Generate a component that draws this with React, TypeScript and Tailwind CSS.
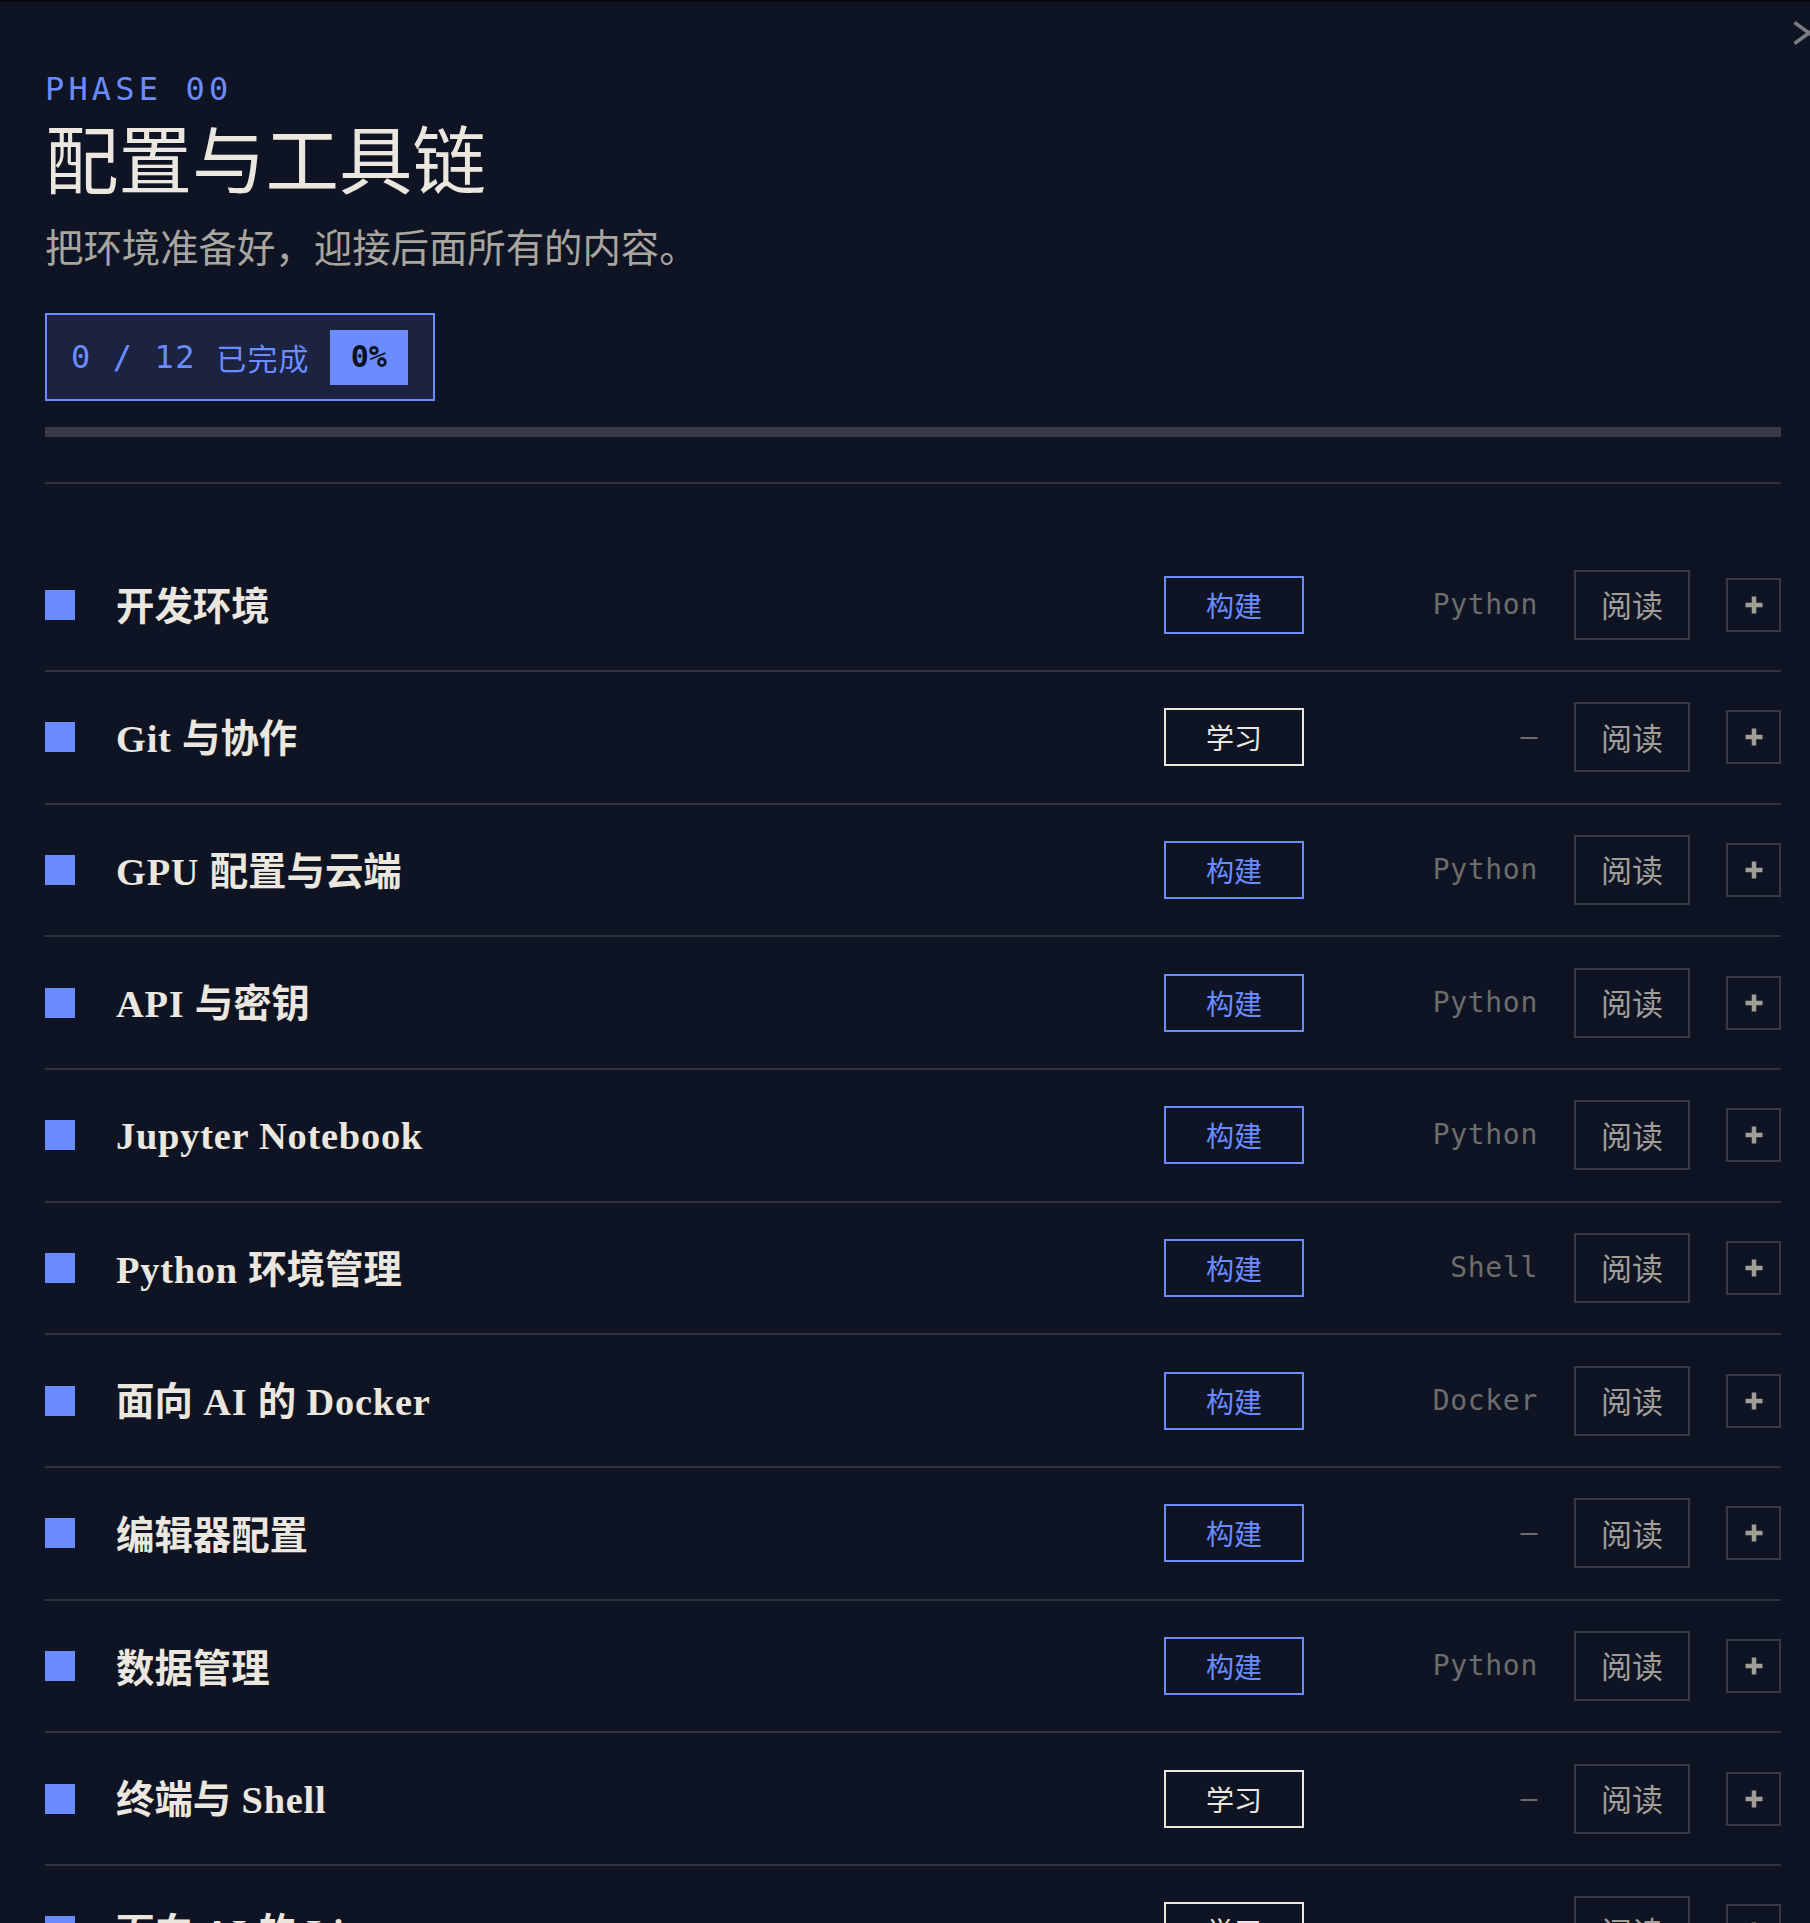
import React from "react";

type Row = { t: string; kind: "build" | "learn"; lang: string };

const rows: Row[] = [
  { t: "开发环境", kind: "build", lang: "Python" },
  { t: "Git 与协作", kind: "learn", lang: "—" },
  { t: "GPU 配置与云端", kind: "build", lang: "Python" },
  { t: "API 与密钥", kind: "build", lang: "Python" },
  { t: "Jupyter Notebook", kind: "build", lang: "Python" },
  { t: "Python 环境管理", kind: "build", lang: "Shell" },
  { t: "面向 AI 的 Docker", kind: "build", lang: "Docker" },
  { t: "编辑器配置", kind: "build", lang: "—" },
  { t: "数据管理", kind: "build", lang: "Python" },
  { t: "终端与 Shell", kind: "learn", lang: "—" },
  { t: "面向 AI 的 Linux", kind: "learn", lang: "—" },
  { t: "调试与日志", kind: "build", lang: "Python" },
];

function splitRuns(s: string): { text: string; cjk: boolean }[] {
  const out: { text: string; cjk: boolean }[] = [];
  const re = /[\u3000-\u303f\u4e00-\u9fff\uff00-\uffef]+/g;
  let last = 0;
  let m: RegExpExecArray | null;
  while ((m = re.exec(s)) !== null) {
    if (m.index > last) out.push({ text: s.slice(last, m.index), cjk: false });
    out.push({ text: m[0], cjk: true });
    last = m.index + m[0].length;
  }
  if (last < s.length) out.push({ text: s.slice(last), cjk: false });
  return out;
}

function Badge({ kind }: { kind: "build" | "learn" }) {
  if (kind === "build") {
    return (
      <div className="w-[140px] h-[58px] shrink-0 border-2 border-[#6b8cff] flex items-center justify-center text-[28px] leading-none text-[#6b8cff] font-['Noto_Sans_CJK_SC',sans-serif]">
        构建
      </div>
    );
  }
  return (
    <div className="w-[140px] h-[58px] shrink-0 border-2 border-[#ebe7de] flex items-center justify-center text-[28px] leading-none text-[#ebe7de] font-['Noto_Sans_CJK_SC',sans-serif]">
      学习
    </div>
  );
}

function Title({ t }: { t: string }) {
  return (
    <div className="ml-[41px] flex-1 text-[38.4px] leading-none text-[#ebe7de] whitespace-pre">
      {splitRuns(t).map((r, i) =>
        r.cjk ? (
          <span key={i} className="font-semibold font-['Noto_Sans_CJK_SC',sans-serif]">
            {r.text}
          </span>
        ) : (
          <span key={i} className="font-semibold tracking-[0.02em] font-['Liberation_Serif',serif]">
            {r.text}
          </span>
        )
      )}
    </div>
  );
}

function RowItem({ r }: { r: Row }) {
  return (
    <div className="flex items-center h-[132.67px] border-b-2 border-[#30333d]">
      <div className="w-[30px] h-[30px] bg-[#6b8cff] shrink-0" />
      <Title t={r.t} />
      <div className="flex items-center gap-[36px]">
        <Badge kind={r.kind} />
        <div className="w-[198px] text-right text-[28px] leading-none tracking-[0.025em] text-[#6e6d6b] font-['DejaVu_Sans_Mono',monospace]">
          {r.lang}
        </div>
        <div className="w-[116px] h-[70px] border-2 border-[#373a45] flex items-center justify-center pb-[2px] text-[31px] leading-none text-[#a19e97] font-['Noto_Sans_CJK_SC',sans-serif]">
          阅读
        </div>
        <div className="w-[55px] h-[54px] border-2 border-[#373a45] flex items-center justify-center">
          <svg width="18" height="18" viewBox="0 0 18 18">
            <rect x="6.75" y="0.5" width="4.5" height="17" fill="#a19e97" />
            <rect x="0.5" y="6.75" width="17" height="4.5" fill="#a19e97" />
          </svg>
        </div>
      </div>
    </div>
  );
}

export default function App() {
  return (
    <div className="relative w-full h-screen overflow-hidden bg-[#0f1424]">
      <div className="h-[2px] bg-[#05070c]" />
      <svg
        className="absolute left-[1793px] top-[21px]"
        width="32"
        height="24"
        viewBox="0 0 32 24"
      >
        <path d="M1.5 1.5 L30.5 22.5 M1.5 22.5 L30.5 1.5" stroke="#7b7c82" strokeWidth="3.5" fill="none" />
      </svg>
      <div className="pl-[45px] pt-[68px] w-[1781px]">
        <div className="text-[32px] leading-[38px] tracking-[0.13em] text-[#6b8cff] font-['DejaVu_Sans_Mono',monospace]">
          PHASE 00
        </div>
        <div className="mt-[6px] text-[73.5px] leading-[84px] text-[#ebe7de] font-['Noto_Sans_CJK_SC',sans-serif]">
          配置与工具链
        </div>
        <div className="mt-[21px] text-[38.4px] leading-[52px] text-[#a8a69f] font-['Noto_Sans_CJK_SC',sans-serif]">
          把环境准备好，迎接后面所有的内容。
        </div>
        <div className="mt-[42px] inline-flex items-center h-[88px] border-2 border-[#6b8cff] bg-[#1b2340] pl-[24px] pr-[25px] gap-[20px]">
          <span className="text-[32px] leading-none tracking-[0.05em] text-[#6b8cff] font-['DejaVu_Sans_Mono',monospace] whitespace-pre">
            0 / 12
          </span>
          <span className="text-[30px] leading-none tracking-[0.04em] text-[#6b8cff] font-['Noto_Sans_CJK_SC',sans-serif]">
            已完成
          </span>
          <span className="w-[78px] h-[55px] bg-[#6b8cff] flex items-center justify-center text-[30px] leading-none font-semibold text-[#0d1222] font-['DejaVu_Sans_Mono',monospace]">
            0%
          </span>
        </div>
        <div className="mt-[26px] h-[10px] bg-[#383b46]" />
        <div className="mt-[45px] h-[2px] bg-[#30333d]" />
        <div className="mt-[55.3px]">
          {rows.map((r, i) => (
            <RowItem key={i} r={r} />
          ))}
        </div>
      </div>
    </div>
  );
}
